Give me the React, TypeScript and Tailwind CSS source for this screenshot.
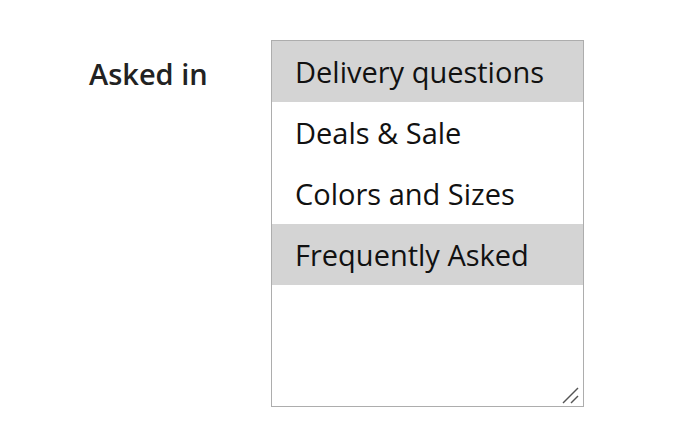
const options = [
  { label: "Delivery questions", selected: true },
  { label: "Deals & Sale", selected: false },
  { label: "Colors and Sizes", selected: false },
  { label: "Frequently Asked", selected: true },
];

export default function App() {
  return (
    <div className="flex h-[444px] w-[685px] bg-white pl-[89px] pt-[40px] font-['Open_Sans',sans-serif]">
      <label className="w-[182px] pt-[16px] text-[29px] leading-[36px] font-semibold text-[#222]">
        Asked in
      </label>
      <div className="relative h-[367px] w-[313px] border border-[#adadad] bg-white">
        {options.map((o) => (
          <div
            key={o.label}
            className={`flex h-[61px] items-center pl-[23px] text-[29px] text-[#111] ${
              o.selected ? "bg-[#d4d4d4]" : ""
            }`}
          >
            {o.label}
          </div>
        ))}
        <svg className="absolute right-[3px] bottom-[2px]" width="18" height="18" viewBox="0 0 18 18">
          <path d="M1 17 L16 2" stroke="#555" strokeWidth="1.4" />
          <path d="M9 17 L16 10" stroke="#555" strokeWidth="1.4" />
        </svg>
      </div>
    </div>
  );
}
